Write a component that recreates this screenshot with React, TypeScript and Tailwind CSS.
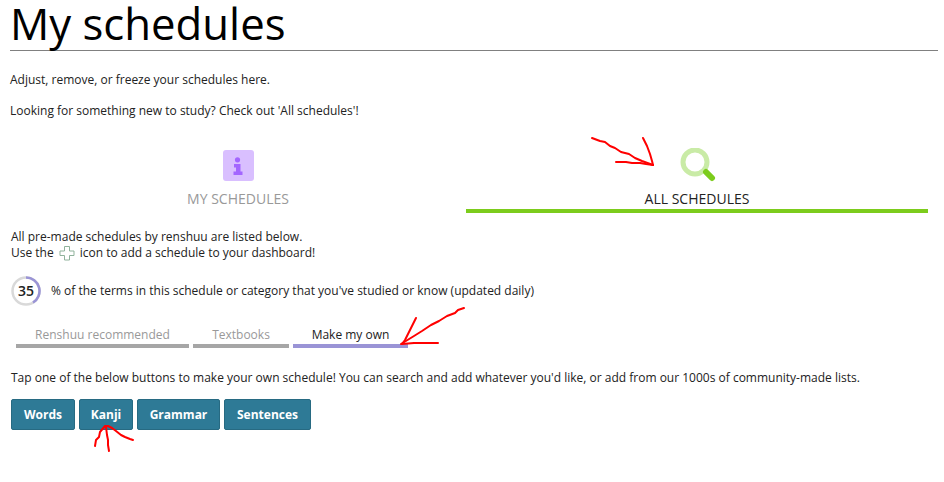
import React from 'react';

const openSans = "font-['Open_Sans',sans-serif]";

export default function App() {
  return (
    <div className={`relative w-[944px] h-[482px] overflow-hidden bg-white text-[12px] leading-[16px] text-[#222] ${openSans}`}>
      <div className="pl-[10px] pr-[6px]">
        {/* Title */}
        <h1 className="h-[51px] border-b border-[#808080] text-[43.7px] leading-[46px] text-black">My schedules</h1>
        <p className="mt-[21px]">Adjust, remove, or freeze your schedules here.</p>
        <p className="mt-[15px]">Looking for something new to study? Check out 'All schedules'!</p>

        {/* Main tabs */}
        <div className="mt-[31px] flex h-[63px] pr-[10px]">
          <div className="flex w-[456px] flex-col items-center">
            <div className="flex h-[31px] w-[31px] items-center justify-center rounded-[3px] bg-[#d9bfff]">
              <svg width="12" height="18" viewBox="0 0 12 18" fill="#a366ff">
                <circle cx="5.5" cy="2.8" r="2.6" />
                <path d="M2 7h6.5v7.5h2V18h-9v-3.500h2.500v-4H2z" />
              </svg>
            </div>
            <span className="mt-[9px] text-[14px] leading-[18px] text-[#999]">MY SCHEDULES</span>
          </div>
          <div className="flex w-[462px] flex-col items-center border-b-[4px] border-[#7ccc1c]">
            <svg width="36" height="36" viewBox="0 0 36 36" fill="none" className="ml-[2px] mt-[-2px]">
              <circle cx="15" cy="14" r="12" stroke="#c9eba6" strokeWidth="5" />
              <path d="M26 24l6 6" stroke="#7ccc1c" strokeWidth="6" strokeLinecap="round" />
            </svg>
            <span className="mt-[6px] text-[14px] leading-[18px] text-[#222]">ALL SCHEDULES</span>
          </div>
        </div>

        <p className="mt-[16px] pl-px">All pre-made schedules by renshuu are listed below.</p>
        <p className="flex items-center pl-px">
          Use the
          <svg width="16" height="16" viewBox="0 0 16 16" fill="none" className="mx-[5px]">
            <path d="M5.500 1.500h5V6H15v4.500h-4.500V15h-5v-4.500H1V6h4.500z" stroke="#8fb29b" strokeWidth="1" />
          </svg>
          icon to add a schedule to your dashboard!
        </p>

        {/* Progress legend */}
        <div className="mt-[15px] flex items-center pl-px">
          <div className="relative h-[30px] w-[30px]">
            <svg width="30" height="30" viewBox="0 0 30 30" fill="none">
              <circle cx="15" cy="15" r="13.500" stroke="#d9d9d9" strokeWidth="2.500" />
              <path d="M15 1.500a13.500 13.500 0 0 1 7 25.050" stroke="#9a94d6" strokeWidth="2.500" />
            </svg>
            <span className="absolute inset-0 flex items-center justify-center pb-px text-[14px] font-semibold text-[#222]">35</span>
          </div>
          <span className="ml-[10px]">% of the terms in this schedule or category that you've studied or know (updated daily)</span>
        </div>

        {/* Sub tabs */}
        <div className="mt-[21px] ml-[6px] flex gap-[4px] text-center">
          <div className="w-[173px] border-b-[4px] border-[#a6a6a6] pb-[1px] text-[#999]">Renshuu recommended</div>
          <div className="w-[96px] border-b-[4px] border-[#a6a6a6] pb-[1px] text-[#999]">Textbooks</div>
          <div className="w-[115px] border-b-[4px] border-[#9a94d6] pb-[1px] text-[#222]">Make my own</div>
        </div>

        <p className="mt-[22px] pl-px">Tap one of the below buttons to make your own schedule! You can search and add whatever you'd like, or add from our 1000s of community-made lists.</p>

        {/* Buttons */}
        <div className="mt-[13px] ml-px flex gap-[4px] text-[12px] font-bold text-white">
          <button className="h-[31px] w-[64px] rounded-[2px] border border-[#276a82] bg-[#2e7a96]">Words</button>
          <button className="h-[31px] w-[54px] rounded-[2px] border border-[#276a82] bg-[#2e7a96]">Kanji</button>
          <button className="h-[31px] w-[83px] rounded-[2px] border border-[#276a82] bg-[#2e7a96]">Grammar</button>
          <button className="h-[31px] w-[87px] rounded-[2px] border border-[#276a82] bg-[#2e7a96]">Sentences</button>
        </div>
      </div>

      {/* Red hand-drawn scribbles over the page */}
      <svg width="944" height="482" viewBox="0 0 944 482" fill="none" stroke="#ff0000" strokeWidth="2" strokeLinecap="round" strokeLinejoin="round" className="pointer-events-none absolute left-0 top-0">
        <path d="M592 138l8 3 5 1 5 4 5 2 6 4 8 2 6 4 7 3 11 4" />
        <path d="M643 138l4 8 3 8 2 7 1 4" />
        <path d="M616 162l10 0 6 1 8 0 6 1 7 1" />
        <path d="M464 308l-6 2-3 3-8 3-8 5-8 4-9 6-8 5-13 8" />
        <path d="M416 318l-4 8-4 8-3 6-3 4" />
        <path d="M402 344l12-1 10 0 14 0" />
        <path d="M95 446l1-6 3-3 1-5 5-6 3 0 4 2 4 3 5 4 4 2 5 2 3 1" />
        <path d="M106 427l1 8 1 5 0 5 1 6" />
      </svg>
    </div>
  );
}
